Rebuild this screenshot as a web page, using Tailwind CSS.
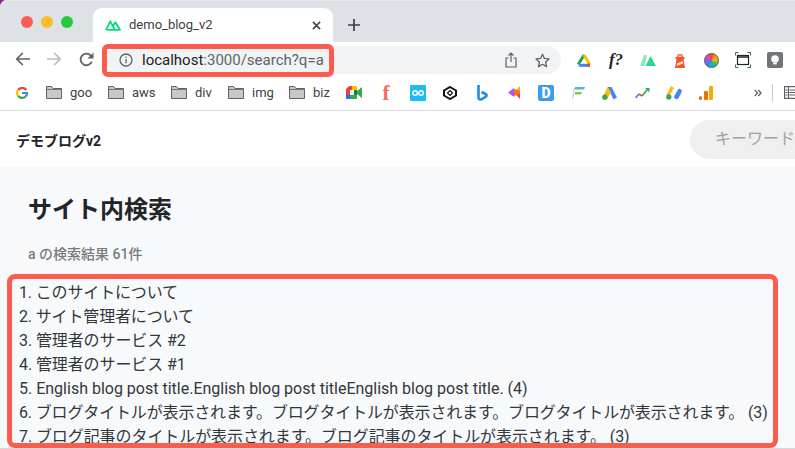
<!DOCTYPE html>
<html lang="ja">
<head>
  <meta charset="UTF-8">
  <title>demo_blog_v2</title>
  <script src="https://cdn.jsdelivr.net/npm/@tailwindcss/browser@4"></script>
</head>
<body class="w-[795px] h-[449px] overflow-hidden bg-[#7b2d8b] font-['Roboto','Noto_Sans_CJK_JP',sans-serif] text-[#212529]">
  <div class="relative w-[795px] h-[449px] overflow-hidden rounded-tl-[7px] bg-white">

    <!-- Tab strip -->
    <div class="flex h-[42px] bg-[#dee1e6] border-t border-[#e8e9ec]">
      <div class="flex items-center gap-[8px] pl-[21px] w-[93px] h-[41px]">
        <span class="w-[12px] h-[12px] rounded-full bg-[#fc5c57]"></span>
        <span class="w-[12px] h-[12px] rounded-full bg-[#fdbc2e]"></span>
        <span class="w-[12px] h-[12px] rounded-full bg-[#28c840]"></span>
      </div>
      <div class="flex items-center w-[240px] h-[34px] mt-[7px] rounded-t-[9px] bg-white pl-[12px] pr-[12px]">
        <svg class="w-[16px] h-[12px] mr-[8px]" viewBox="0 0 16 12" fill="none" stroke="#00dc82" stroke-width="1.8" stroke-linejoin="round">
          <path d="M1 10.8 5.3 2.4 9.8 10.8H1.4"/><path d="M7.8 7.2 10.4 3.2 15 10.8H10"/>
        </svg>
        <span class="text-[13px] text-[#3c4043]">demo_blog_v2</span>
        <svg class="ml-auto w-[9px] h-[9px]" viewBox="0 0 10 10" stroke="#45484c" stroke-width="1.8"><path d="M1 1 9 9M9 1 1 9"/></svg>
      </div>
      <svg class="w-[14px] h-[14px] ml-[14px] mt-[17px]" viewBox="0 0 14 14" stroke="#3c4043" stroke-width="1.7"><path d="M7 1v12M1 7h12"/></svg>
    </div>

    <!-- Toolbar -->
    <div class="flex items-center h-[34px] bg-white">
      <div class="flex items-center w-[105px] pl-[15px] gap-[17px]">
        <svg class="w-[15px] h-[14px]" viewBox="0 0 15 14" fill="none" stroke="#5f6368" stroke-width="1.7"><path d="M15 7H2M7.800 1 1.800 7l6 6"/></svg>
        <svg class="w-[15px] h-[14px]" viewBox="0 0 15 14" fill="none" stroke="#b9bcc0" stroke-width="1.7"><path d="M0 7h13M7.200 1l6 6-6 6"/></svg>
        <svg class="w-[15px] h-[15px]" viewBox="0 0 15 15" fill="none" stroke="#5f6368" stroke-width="1.8"><path d="M12.800 9.600A5.800 5.800 0 1 1 11.600 3.400L13.500 5.200"/><path d="M14.500 .5v6h-6Z" fill="#5f6368" stroke="none"/></svg>
      </div>
      <div class="flex items-center w-[456px] h-[28px] rounded-full bg-[#f1f3f4] pl-[14px] pr-[11px] mt-[2px]">
        <svg class="w-[14px] h-[14px] mr-[9px]" viewBox="0 0 14 14" fill="none" stroke="#5f6368" stroke-width="1.3"><circle cx="7" cy="7" r="6"/><path d="M7 6v4.200M7 3.400v1.400"/></svg>
        <span class="text-[15px] text-[#202124]">localhost<span class="text-[#5f6368]">:3000/search?q=a</span></span>
        <svg class="ml-auto w-[12px] h-[16px]" viewBox="0 0 12 16" fill="none" stroke="#5f6368" stroke-width="1.2"><path d="M3.500 6H1v9h10V6H8.500M6 10V1M3.500 3.500 6 1l2.500 2.500"/></svg>
        <svg class="ml-[18px] w-[15px] h-[15px]" viewBox="0 0 15 15" fill="none" stroke="#5f6368" stroke-width="1.3" stroke-linejoin="round"><path d="M7.500 1.200 9.400 5.400 14 5.900 10.600 9 11.600 13.600 7.500 11.200 3.400 13.600 4.400 9 1 5.900 5.600 5.400Z"/></svg>
      </div>
      <!-- Extensions -->
      <div class="flex items-center gap-[16px] ml-[15px] mt-[2px]">
        <svg class="w-[16px] h-[14px]" viewBox="0 0 16 14" fill="none" stroke-width="3"><path d="M8 2 2.200 11.500" stroke="#1ea362"/><path d="M8 2 13.800 11.500" stroke="#fbbc04"/><path d="M3 12.300H13" stroke="#4285f4"/><path d="M11 12.300H14" stroke="#ea4335"/></svg>
        <span class="w-[16px] text-center font-['Liberation_Serif',serif] italic font-bold text-[17px] leading-[16px] text-[#222] whitespace-nowrap">f?</span>
        <svg class="w-[16px] h-[12px]" viewBox="0 0 16 12"><path d="M0 12 4 1h3L4.500 12Z" fill="#8de8c4"/><path d="M5.500 12 10.500 2 16 12Z" fill="#2fd592"/></svg>
        <svg class="w-[16px] h-[16px]" viewBox="0 0 16 16"><path d="M3 16 4.500 7H11.500L13 16Z" fill="#f4512c"/><path d="M5 5a3 3 0 0 1 6 0v2H5Z" fill="#f4512c"/><path d="M3.500 5h9v2h-9Z" fill="#f4512c"/><path d="M6.500 3.500h3V5h-3Z" fill="#fde3d8"/><path d="M5 11.500 11 9v2.500L5 14Z" fill="#fde3d8"/></svg>
        <span class="w-[15px] h-[15px] rounded-full bg-[conic-gradient(#ef4444,#f59e0b,#eab308,#22c55e,#06b6d4,#3b82f6,#8b5cf6,#ec4899,#ef4444)] border border-[#555]"></span>
        <svg class="w-[16px] h-[16px]" viewBox="0 0 16 16" fill="none"><path d="M0.500 3.500v-3h3M12.500.5h3v3M15.500 12.500v3h-3M3.500 15.500h-3v-3" stroke="#2e7d32"/><rect x="2.500" y="3.500" width="11" height="9" stroke="#222" stroke-width="1.200"/><path d="M2.500 5h11" stroke="#222" stroke-width="1.500"/></svg>
        <svg class="w-[16px] h-[16px]" viewBox="0 0 16 16"><rect width="16" height="16" rx="2" fill="#70757a"/><circle cx="8" cy="7" r="3.800" fill="#fff"/><rect x="6.200" y="10.800" width="3.600" height="1.600" fill="#fff"/></svg>
      </div>
    </div>

    <!-- Bookmarks bar -->
    <div class="flex items-center h-[35px] pb-[1px] bg-white border-b border-[#dadce0] text-[13px] text-[#3c4043] [&>*]:shrink-0">
      <svg class="ml-[16px] w-[12px] h-[12px] mr-[18px]" viewBox="0 0 12 12" fill="none" stroke-width="2.200"><path d="M10.300 3.100A5 5 0 0 0 2.200 3" stroke="#ea4335"/><path d="M2.200 3A5 5 0 0 0 2.200 9" stroke="#fbbc05"/><path d="M2.200 9A5 5 0 0 0 9.600 9.500" stroke="#34a853"/><path d="M9.600 9.500C10.700 8.500 11 7.400 11 6H6" stroke="#4285f4"/></svg>
      <div class="flex items-center gap-[8px] w-[62px]"><svg class="w-[16px] h-[13px]" viewBox="0 0 16 13"><path d="M.5 12.500V.5h5l1.500 2h8.500v10Z" fill="#c8c8c8" stroke="#5f6368"/><path d="M.5 3.500h15" stroke="#5f6368" stroke-width=".8"/></svg><span>goo</span></div>
      <div class="flex items-center gap-[8px] w-[63px]"><svg class="w-[16px] h-[13px]" viewBox="0 0 16 13"><path d="M.5 12.500V.5h5l1.500 2h8.500v10Z" fill="#c8c8c8" stroke="#5f6368"/><path d="M.5 3.500h15" stroke="#5f6368" stroke-width=".8"/></svg><span>aws</span></div>
      <div class="flex items-center gap-[8px] w-[57px]"><svg class="w-[16px] h-[13px]" viewBox="0 0 16 13"><path d="M.5 12.500V.5h5l1.500 2h8.500v10Z" fill="#c8c8c8" stroke="#5f6368"/><path d="M.5 3.500h15" stroke="#5f6368" stroke-width=".8"/></svg><span>div</span></div>
      <div class="flex items-center gap-[8px] w-[61px]"><svg class="w-[16px] h-[13px]" viewBox="0 0 16 13"><path d="M.5 12.500V.5h5l1.500 2h8.500v10Z" fill="#c8c8c8" stroke="#5f6368"/><path d="M.5 3.500h15" stroke="#5f6368" stroke-width=".8"/></svg><span>img</span></div>
      <div class="flex items-center gap-[8px] w-[57px]"><svg class="w-[16px] h-[13px]" viewBox="0 0 16 13"><path d="M.5 12.500V.5h5l1.500 2h8.500v10Z" fill="#c8c8c8" stroke="#5f6368"/><path d="M.5 3.500h15" stroke="#5f6368" stroke-width=".8"/></svg><span>biz</span></div>
      <!-- Bookmark favicons -->
      <svg class="w-[16px] h-[13px]" viewBox="0 0 16 13"><path d="M0 3 3 0h3v4H4v5H0Z" fill="#ea4335"/><path d="M6 0h5v4H6Z" fill="#fbbc04"/><path d="M0 9h4v4H1a1 1 0 0 1-1-1Z" fill="#1a73e8"/><path d="M4 9h7v3a1 1 0 0 1-1 1H4Z" fill="#34a853"/><path d="M8 4h3v5H8Z" fill="#188038"/><path d="M11 5 16 1v11L11 8Z" fill="#34a853"/></svg>
      <span class="ml-[16px] w-[16px] text-center font-['Liberation_Serif',serif] font-bold text-[21px] leading-[16px] text-[#f4695d]">f</span>
      <span class="ml-[16px] flex items-center justify-center w-[16px] h-[16px] rounded-[1px] bg-[#1dbcf4]"><svg class="w-[12px] h-[6px]" viewBox="0 0 12 6" fill="none" stroke="#fff" stroke-width="1.400"><circle cx="3" cy="3" r="2.300"/><circle cx="9" cy="3" r="2.300"/></svg></span>
      <svg class="ml-[17px] w-[14px] h-[14px]" viewBox="0 0 14 14" fill="none" stroke="#111" stroke-width="2"><path d="M7 1 13 4.500v5L7 13 1 9.500v-5Z"/><path d="M7 4.500 9.500 7 7 9.500 4.500 7Z" stroke-width="1.200"/></svg>
      <svg class="ml-[20px] w-[11px] h-[16px]" viewBox="0 0 11 16" fill="none" stroke-width="2.600"><path d="M1.500 0V12.500C1.500 14 3 15 4.500 14.300L9 11.500C10 10.500 9.500 9.500 8.500 9L4.500 7" stroke="#1f8ce8"/></svg>
      <svg class="ml-[20px] w-[12px] h-[13px]" viewBox="0 0 12 13"><path d="M12 0v5L6 6.500Z" fill="#f4b400"/><path d="M12 13V8L6 6.500Z" fill="#ef4444"/><path d="M0 6.500 6 2v9Z" fill="#a855f7"/><path d="M6 3 12 5v3L6 10Z" fill="#f97316"/></svg>
      <span class="ml-[18px] flex items-center justify-center w-[16px] h-[16px] rounded-[2px] bg-[#3b9df2] text-white text-[14px] leading-none font-black">D</span>
      <svg class="ml-[18px] w-[13px] h-[12px]" viewBox="0 0 13 12"><path d="M3 0h10l-1 2.500H3Z" fill="#4db6e5"/><path d="M3 5h7l-1 2.500H3Z" fill="#8bc34a"/><path d="M2 1h1L1 12H0Z" fill="#c4c4c4"/></svg>
      <svg class="ml-[17px] w-[15px] h-[14px]" viewBox="0 0 15 14"><path d="M5.500 1 9.500 1 15 11.500 11.500 13.500Z" fill="#4285f4"/><path d="M5.500 1 9 6 5 13 1 11Z" fill="#fbbc04"/><circle cx="2.800" cy="11.200" r="2.600" fill="#34a853"/></svg>
      <svg class="ml-[18px] w-[15px] h-[12px]" viewBox="0 0 15 12" fill="none" stroke-width="1.700"><path d="M.5 11 4 7" stroke="#4285f4"/><path d="M4 7 7 9" stroke="#ea4335"/><path d="M7 9 12 3" stroke="#34a853"/><path d="M10 1h4.500v4.500Z" fill="#34a853" stroke="none"/></svg>
      <svg class="ml-[16px] w-[16px] h-[15px]" viewBox="0 0 16 15"><path d="M5 1 8 3 3.500 11 .8 9.500Z" fill="#fbbc04"/><circle cx="2.800" cy="12" r="2.700" fill="#34a853"/><path d="M12 4.500a2.300 2.300 0 0 1 3.600 2.700L12.500 13a2.300 2.300 0 0 1-4-2.300Z" fill="#4285f4"/></svg>
      <svg class="ml-[17px] w-[14px] h-[14px]" viewBox="0 0 14 14"><rect x="0" y="10" width="3" height="4" rx="1.500" fill="#e8710a"/><rect x="5" y="5" width="4" height="9" rx="1" fill="#e8710a"/><rect x="10" y="0" width="4" height="14" rx="1" fill="#f9ab00"/></svg>
      <svg class="ml-[41px] w-[8px] h-[8px]" viewBox="0 0 8 8" fill="none" stroke="#5f6368" stroke-width="1.300"><path d="M.7 1 3.500 4 .7 7M4.300 1 7 4 4.300 7"/></svg>
      <span class="ml-[10px] w-px h-[18px] bg-[#c8cacd]"></span>
      <svg class="ml-[11px] w-[16px] h-[13px]" viewBox="0 0 16 13" fill="none" stroke="#5f6368" stroke-width="1.200"><rect x=".6" y=".6" width="16" height="11.800"/><path d="M4.500 1v11M5.500 4h10M5.500 6.500h10M5.500 9h10M1.500 4h2M1.500 6.500h2M1.500 9h2"/></svg>
    </div>

    <!-- Page header -->
    <header class="flex items-center justify-between h-[56px] bg-white pl-[16px]">
      <a class="pt-[4px] text-[14px] font-bold text-[#212529]">デモブログv2</a>
      <div class="flex items-center w-[220px] h-[39px] -mr-[115px] rounded-full bg-[#efefef] pl-[25px] text-[16px] text-[#a0a0a0]">キーワード</div>
    </header>

    <!-- Main -->
    <main class="h-[282px] bg-[#f8f9fb] pl-[19px] pt-[27px] border-b border-[#d5d7da] box-border">
      <h1 class="pl-[10px] -ml-[1px] text-[24px] leading-[32px] font-bold text-[#212529]">サイト内検索</h1>
      <p class="pl-[9px] mt-[18px] text-[14px] leading-[20px] font-medium text-[#777b80]">a の検索結果 61件</p>
      <ol class="mt-[17px] text-[16px] leading-[24px] text-[#32373c]">
        <li class="tracking-[-0.15px]">1. このサイトについて</li>
        <li class="tracking-[-0.15px]">2. サイト管理者について</li>
        <li class="tracking-[-0.1px]">3. 管理者のサービス #2</li>
        <li class="tracking-[-0.1px]">4. 管理者のサービス #1</li>
        <li>5. English blog post title.English blog post titleEnglish blog post title. (4)</li>
        <li class="tracking-[-0.15px]">6. ブログタイトルが表示されます。ブログタイトルが表示されます。ブログタイトルが表示されます。 (3)</li>
        <li class="tracking-[-0.08px]">7. ブログ記事のタイトルが表示されます。ブログ記事のタイトルが表示されます。 (3)</li>
      </ol>
    </main>

    <!-- Red annotation boxes -->
    <div class="absolute left-[102px] top-[44px] w-[232px] h-[33px] rounded-[6px] border-[5px] border-[#fe5b4f]"></div>
    <div class="absolute left-[7px] top-[274px] w-[771px] h-[174px] rounded-[8px] border-[5px] border-[#fe5b4f]"></div>
  </div>
</body>
</html>
